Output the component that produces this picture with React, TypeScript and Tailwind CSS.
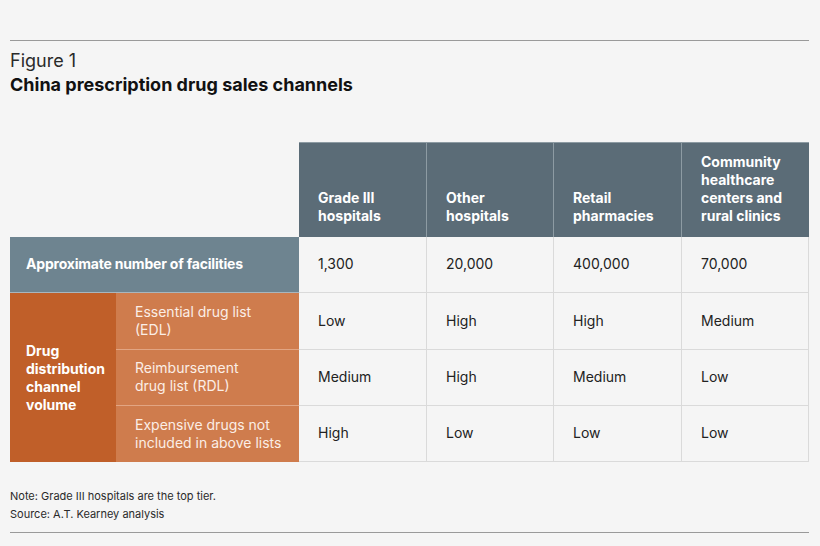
const cols = [
  { head: ['Grade III', 'hospitals'], count: '1,300', vals: ['Low', 'Medium', 'High'] },
  { head: ['Other', 'hospitals'], count: '20,000', vals: ['High', 'High', 'Low'] },
  { head: ['Retail', 'pharmacies'], count: '400,000', vals: ['High', 'Medium', 'Low'] },
  { head: ['Community', 'healthcare', 'centers and', 'rural clinics'], count: '70,000', vals: ['Medium', 'Low', 'Low'] },
];

const lists = [
  ['Essential drug list', '(EDL)'],
  ['Reimbursement', 'drug list (RDL)'],
  ['Expensive drugs not', 'included in above lists'],
];

export default function App() {
  return (
    <div className="w-[820px] h-[546px] bg-[#f5f5f5] text-[#1c1c1c] font-['Inter',sans-serif] overflow-hidden">
      <div className="px-[10px] pt-[40px]">
        <div className="w-[799px] border-t border-[#9a9a9a]" />
        <div className="mt-[9px] text-[18px] leading-[22px] text-[#2a2a2a]">Figure 1</div>
        <div className="mt-[2px] text-[18px] leading-[22px] font-bold text-[#111]">
          China prescription drug sales channels
        </div>

        {/* Table */}
        <div className="mt-[46px] grid grid-cols-[106px_183px_128px_127px_128px_127px] grid-rows-[95px_56px_57px_56px_56px] w-[799px] text-[14px] leading-[18px]">
          <div className="col-span-2" />
          {cols.map((c, i) => (
            <div
              key={i}
              className={`bg-[#5b6c77] text-white font-bold flex flex-col justify-end pl-[19px] pb-[12px] border-t border-[#8d9ba3] ${
                i < 3 ? 'border-r border-r-[#8d9ba3]' : ''
              }`}
            >
              {c.head.map((h) => (
                <span key={h}>{h}</span>
              ))}
            </div>
          ))}

          {/* Approx row */}
          <div className="col-span-2 bg-[#6e8490] text-white font-bold flex items-center pl-[16px] pb-[1px] border-b border-[#a9b6bd] tracking-[-0.2px]">
            Approximate number of facilities
          </div>
          {cols.map((c, i) => (
            <div key={i} className="flex items-center pl-[19px] pb-[1px] border-r border-b border-[#dadada] text-[#222]">
              {c.count}
            </div>
          ))}

          {/* Orange block */}
          <div className="row-span-3 bg-[#c05f29] text-white font-bold flex flex-col justify-center pl-[16px]">
            <span>Drug</span>
            <span>distribution</span>
            <span>channel</span>
            <span>volume</span>
          </div>
          {lists.map((l, r) => (
            <Row key={r} label={l} vals={cols.map((c) => c.vals[r])} last={r === 2} />
          ))}
        </div>

        <div className="mt-[25px] text-[11px] leading-[18px] text-[#2a2a2a]">
          <div>Note: Grade III hospitals are the top tier.</div>
          <div>Source: A.T. Kearney analysis</div>
        </div>
        <div className="mt-[9px] w-[799px] border-t border-[#9a9a9a]" />
      </div>
    </div>
  );
}

function Row({ label, vals, last }: { label: string[]; vals: string[]; last: boolean }) {
  return (
    <>
      <div
        className={`bg-[#cf7c4d] text-[#fbeee6] flex flex-col justify-center pl-[19px] pb-[1px] ${
          last ? '' : 'border-b border-[#e2a583]'
        }`}
      >
        {label.map((t) => (
          <span key={t}>{t}</span>
        ))}
      </div>
      {vals.map((v, i) => (
        <div key={i} className="flex items-center pl-[19px] pb-[1px] border-r border-b border-[#dadada] text-[#222]">
          {v}
        </div>
      ))}
    </>
  );
}
